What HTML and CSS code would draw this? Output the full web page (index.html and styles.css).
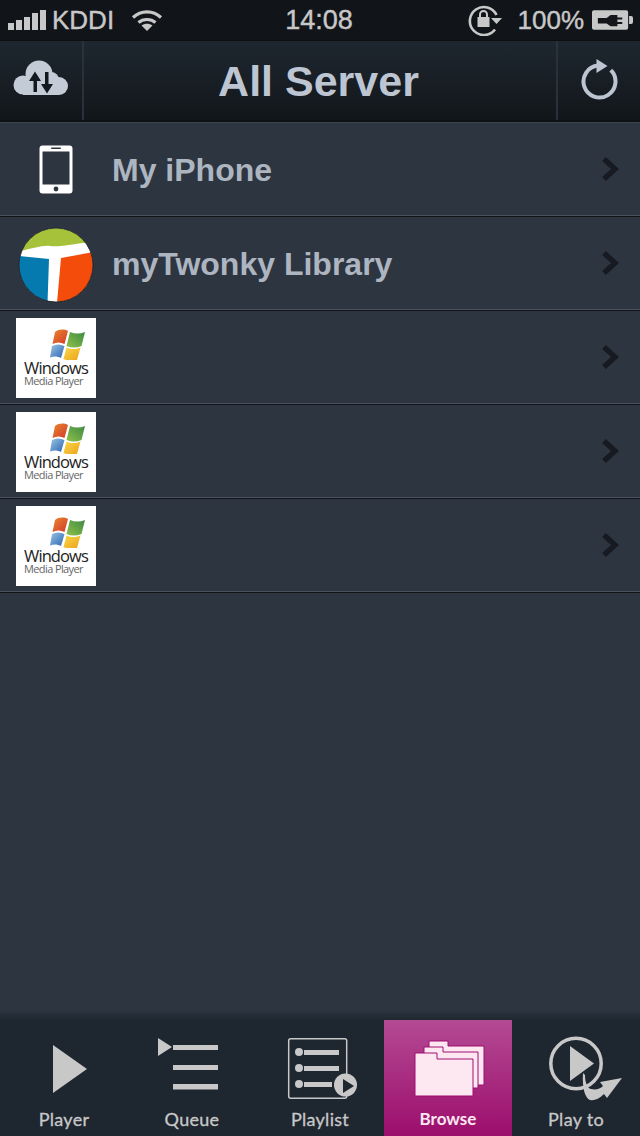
FILE: index.html
```html
<!DOCTYPE html>
<html lang="en">
<head>
<meta charset="utf-8">
<title>All Server</title>
<link rel="stylesheet" href="styles.css">
</head>
<body>
<svg class="defs" width="0" height="0" aria-hidden="true">
  <defs>
    <linearGradient id="g-red" x1="0" y1="0" x2="1" y2="1"><stop offset="0" stop-color="#e8882e"/><stop offset="1" stop-color="#d4382a"/></linearGradient>
    <linearGradient id="g-green" x1="0" y1="1" x2="1" y2="0"><stop offset="0" stop-color="#8dc04a"/><stop offset="1" stop-color="#3e8a42"/></linearGradient>
    <linearGradient id="g-blue" x1="0" y1="0" x2="1" y2="1"><stop offset="0" stop-color="#9cc4e6"/><stop offset="1" stop-color="#2a66b0"/></linearGradient>
    <linearGradient id="g-yellow" x1="0" y1="0" x2="1" y2="1"><stop offset="0" stop-color="#f8d84a"/><stop offset="1" stop-color="#eda018"/></linearGradient>
    <symbol id="flag" viewBox="0 0 35 32">
      <path fill="url(#g-red)" d="M5 4c4-3 9-3 13-1l-3.500 13c-4-2-8-2-12 0z"/>
      <path fill="url(#g-green)" d="M20 4c5 2 10 2 15 0l-3.500 14c-5 2-10 2-15 0z"/>
      <path fill="url(#g-blue)" d="M2 18c4-2 8-2 12.500 0L11 30c-4-2-7-2-11-0.500z"/>
      <path fill="url(#g-yellow)" d="M16.500 19.500c5 2 9 2 14 0L27 32c-5 1.500-9 1-13.500-1z"/>
    </symbol>
    <symbol id="chev" viewBox="0 0 18 26">
      <path d="M3 3l11 10L3 23" fill="none" stroke="#171b21" stroke-width="5.500"/>
    </symbol>
  </defs>
</svg>
<div class="app">
  <header class="status">
    <div class="status-left">
      <svg class="signal" width="38" height="20" viewBox="0 0 38 20"><path fill="#c8c8c8" d="M0 13h6v7H0zM8 10h6v10H8zM16 7h6v13h-6zM24 3h6v17h-6zM32 0h6v20h-6z"/></svg>
      <span class="carrier">KDDI</span>
      <svg class="wifi" width="32" height="22" viewBox="0 0 32 22"><g fill="none" stroke="#c8c8c8" stroke-width="3.200"><path d="M2 8.500C10 1 22 1 30 8.500"/><path d="M7.500 13.500C12 9.500 20 9.500 24.500 13.500"/></g><path fill="#c8c8c8" d="M16 22l-5.500-5.500c3-2.500 8-2.500 11 0z"/></svg>
    </div>
    <div class="clock">14:08</div>
    <div class="status-right">
      <svg class="lock" width="36" height="32" viewBox="0 0 36 32"><path d="M27 25.500A14 14 0 1 1 28.500 11" fill="none" stroke="#c8c8c8" stroke-width="2.600"/><path fill="#c8c8c8" d="M23 14h11l-5.500 6z"/><path fill="#c8c8c8" d="M9.500 13h12v10h-12z"/><path d="M12 13V10.500a3.500 3.500 0 0 1 7 0V13" fill="none" stroke="#c8c8c8" stroke-width="2"/></svg>
      <span class="percent">100%</span>
      <svg class="battery" width="41" height="20" viewBox="0 0 42 20"><path fill="#c8c8c8" d="M2 0h33a2 2 0 0 1 2 2v16a2 2 0 0 1-2 2H2a2 2 0 0 1-2-2V2a2 2 0 0 1 2-2zM38 6h2a2 2 0 0 1 2 2v4a2 2 0 0 1-2 2h-2z"/><path fill="#14161a" d="M6 8h9l4-3h7v2.500h5v2h-5v2.500h5v2h-5v2.500h-7l-4-3H6z"/></svg>
    </div>
  </header>

  <nav class="navbar">
    <div class="nav-btn left">
      <svg class="cloud" width="56" height="36" viewBox="0 0 56 36">
        <g fill="#c3cbd6"><circle cx="26" cy="14" r="13.500"/><circle cx="10" cy="25" r="9.500"/><circle cx="46" cy="26" r="9"/><circle cx="38" cy="20" r="8"/><rect x="10" y="20" width="36" height="15"/></g>
        <path fill="#14191f" d="M22 11.500L28 21h-4v11h-3.500V21H16zM34 33.500L28 24h4V12h3.500v12H40z"/>
      </svg>
    </div>
    <h1 class="title">All Server</h1>
    <div class="nav-btn right">
      <svg class="refresh" width="40" height="44" viewBox="0 0 40 44"><path d="M20 6.600A16 16 0 1 0 32.800 11.200" fill="none" stroke="#bcc5d1" stroke-width="4"/><path fill="#bcc5d1" d="M18.500 0L29.500 7l-11 7z"/></svg>
    </div>
  </nav>

  <main class="list">
    <a class="row">
      <span class="thumb">
        <svg width="34" height="49" viewBox="0 0 34 49"><rect x="0.500" y="0.500" width="33" height="48" rx="3" fill="#fff"/><rect x="3.500" y="6.500" width="27" height="33" fill="#2d3540"/><rect x="12" y="2.500" width="10" height="1.600" rx="0.800" fill="#2d3540"/><circle cx="17" cy="44" r="2.400" fill="#2d3540"/></svg>
      </span>
      <span class="label">My iPhone</span>
      <svg class="chev" width="18" height="26"><use href="#chev"/></svg>
    </a>
    <a class="row">
      <span class="thumb">
        <svg class="twonky" width="76" height="76" viewBox="0 0 76 76"><defs><clipPath id="disc"><circle cx="38" cy="38" r="37"/></clipPath></defs><g clip-path="url(#disc)"><rect width="76" height="76" fill="#fff"/><path fill="#a5c23a" d="M0 0h76v15.500L65 16C50 18 40 20 32 19 25 18 12 22 3 24L0 25z"/><path fill="#057aae" d="M0 29l31 3-1.500 44H0z"/><path fill="#f44c0a" d="M43 31l33-6v51H39z"/></g><circle cx="38" cy="38" r="37" fill="none" stroke="#14181d" stroke-width="0.800"/></svg>
      </span>
      <span class="label">myTwonky Library</span>
      <svg class="chev" width="18" height="26"><use href="#chev"/></svg>
    </a>
    <a class="row">
      <span class="thumb"><span class="wmp"><svg class="flag" width="35" height="32"><use href="#flag"/></svg><span class="wmp-a">Windows</span><span class="wmp-b">Media Player</span></span></span>
      <svg class="chev" width="18" height="26"><use href="#chev"/></svg>
    </a>
    <a class="row">
      <span class="thumb"><span class="wmp"><svg class="flag" width="35" height="32"><use href="#flag"/></svg><span class="wmp-a">Windows</span><span class="wmp-b">Media Player</span></span></span>
      <svg class="chev" width="18" height="26"><use href="#chev"/></svg>
    </a>
    <a class="row">
      <span class="thumb"><span class="wmp"><svg class="flag" width="35" height="32"><use href="#flag"/></svg><span class="wmp-a">Windows</span><span class="wmp-b">Media Player</span></span></span>
      <svg class="chev" width="18" height="26"><use href="#chev"/></svg>
    </a>
  </main>

  <footer class="tabs">
    <div class="tab">
      <svg width="70" height="62" viewBox="0 0 70 62"><path fill="#c8c8c8" d="M24 7l34 24-34 24z"/></svg>
      <span>Player</span>
    </div>
    <div class="tab">
      <svg width="70" height="62" viewBox="0 0 70 62"><path fill="#c8c8c8" d="M1 0l14 9L1 18zM16 7h45v5H16zM16 27h45v5H16zM16 46h45v5.500H16z"/></svg>
      <span>Queue</span>
    </div>
    <div class="tab">
      <svg width="70" height="62" viewBox="0 0 70 62"><rect x="3.700" y="0.700" width="58" height="59.500" rx="2" fill="none" stroke="#c8c8c8" stroke-width="1.500"/><g fill="#c8c8c8"><circle cx="14" cy="14" r="4"/><circle cx="14" cy="30" r="4"/><circle cx="14" cy="46" r="4"/><path d="M19 12h35v5H19zM19 28h35v5H19zM19 44h28v5H19z"/><circle cx="60.500" cy="47" r="11.500"/></g><path fill="#1e2630" d="M58 41l11 7-11 7z"/></svg>
      <span>Playlist</span>
    </div>
    <div class="tab active">
      <svg width="70" height="62" viewBox="0 0 70 62"><g stroke="#9d0f6e" stroke-width="1"><path fill="#fde8f2" d="M16 3h19v5h36v39H16z"/><path fill="#fde8f2" d="M11 9h19v5h35v36H11z"/><path fill="#fde8f2" d="M2 15h22v6h36v37H2z"/></g></svg>
      <span class="browse">Browse</span>
    </div>
    <div class="tab">
      <svg width="74" height="62" viewBox="0 0 74 62"><circle cx="37" cy="25.500" r="25.200" fill="none" stroke="#c8c8c8" stroke-width="3.500"/><path fill="#c8c8c8" d="M31 8l24 17.500L31 43z"/><path fill="#c8c8c8" d="M44 35L46 37C46 44 48 50 52 51 57 52 61 51 64 48L61 44 83 40 68 60 65 56C60 61 55 63 51 62 46 60 43 50 44 35z"/></svg>
      <span>Play to</span>
    </div>
  </footer>
</div>
</body>
</html>
```
FILE: styles.css
```css
* { box-sizing: border-box; }
html, body { margin: 0; padding: 0; }
body { background: #2d3540; font-family: "Liberation Sans", Arial, sans-serif; overflow: hidden; }
.defs { display: block; height: 0; }
.app { width: 640px; height: 1136px; display: flex; flex-direction: column; }

.status { height: 40px; flex: none; background: #111418; color: #c8c8c8; font-size: 26px; display: grid; grid-template-columns: 1fr auto 1fr; align-items: center; padding: 0 7px 0 8px; }
.status-left { display: flex; align-items: center; }
.signal { margin-right: 6px; }
.carrier { margin-right: 17px; -webkit-text-stroke: 0.4px #c8c8c8; }
.clock { font-size: 27px; margin-right: 3px; -webkit-text-stroke: 0.4px #c8c8c8; }
.status-right { display: flex; align-items: center; justify-content: flex-end; }
.lock { margin-right: 14px; }
.percent { margin-right: 8px; -webkit-text-stroke: 0.4px #c8c8c8; }

.navbar { height: 82px; flex: none; display: flex; align-items: center; background: linear-gradient(#1e2730, #12161a); border-top: 1px solid #0c0e11; border-bottom: 2px solid #0e1114; color: #bcc5d1; }
.nav-btn { width: 84px; height: 100%; display: flex; align-items: center; justify-content: center; border-right: 2px solid #2a313a; flex: none; }
.nav-btn.right { border-right: 0; border-left: 2px solid #2a313a; }
.cloud { margin-bottom: 5px; }
.refresh { margin-right: 2px; }
.title { flex: 1; margin: 0; padding: 1px 3px 0 0; text-align: center; font-size: 43px; font-weight: 700; line-height: 1; }

.list { flex: 1; background: #2d3540; border-top: 1px solid #3b4350; }
.row { height: 94px; display: flex; align-items: center; padding-right: 21px; border-bottom: 1px solid #11151a; box-shadow: inset 0 -1px 0 #4a5260; }
.thumb { width: 112px; flex: none; display: flex; justify-content: center; align-items: center; }
.twonky { margin-top: 2px; }
.label { color: #adb5c1; font-size: 32px; font-weight: 700; margin-top: 2px; }
.chev { margin: 0 0 2px auto; }

.wmp { width: 80px; height: 80px; background: #fff; display: flex; flex-direction: column; align-items: center; overflow: hidden; padding-top: 10px; }
.flag { flex: none; align-self: flex-start; margin-left: 34px; }
.wmp-a { color: #222; font-family: "Open Sans", sans-serif; font-size: 16.500px; line-height: 16px; letter-spacing: -0.9px; }
.wmp-b { color: #666; font-family: "Open Sans", sans-serif; font-size: 11px; line-height: 10px; letter-spacing: -0.6px; margin-right: 5px; }

.tabs { height: 126px; flex: none; display: grid; grid-template-columns: repeat(5, 128px); padding-top: 10px; background: linear-gradient(#2d3540, #1e2630 10px); }
.tab { display: flex; flex-direction: column; align-items: center; padding-top: 18px; color: #c8c8c8; font-family: Lato, sans-serif; font-size: 18px; letter-spacing: 0.3px; -webkit-text-stroke: 0.3px #c8c8c8; }
.tab svg { flex: none; overflow: visible; }
.tab span { margin-top: 8px; line-height: 22px; }
.tab.active { background: linear-gradient(#b44a94, #9c0e6c); color: #fde8f2; -webkit-text-stroke: 0; font-size: 17px; font-weight: 700; letter-spacing: 0; }
```
